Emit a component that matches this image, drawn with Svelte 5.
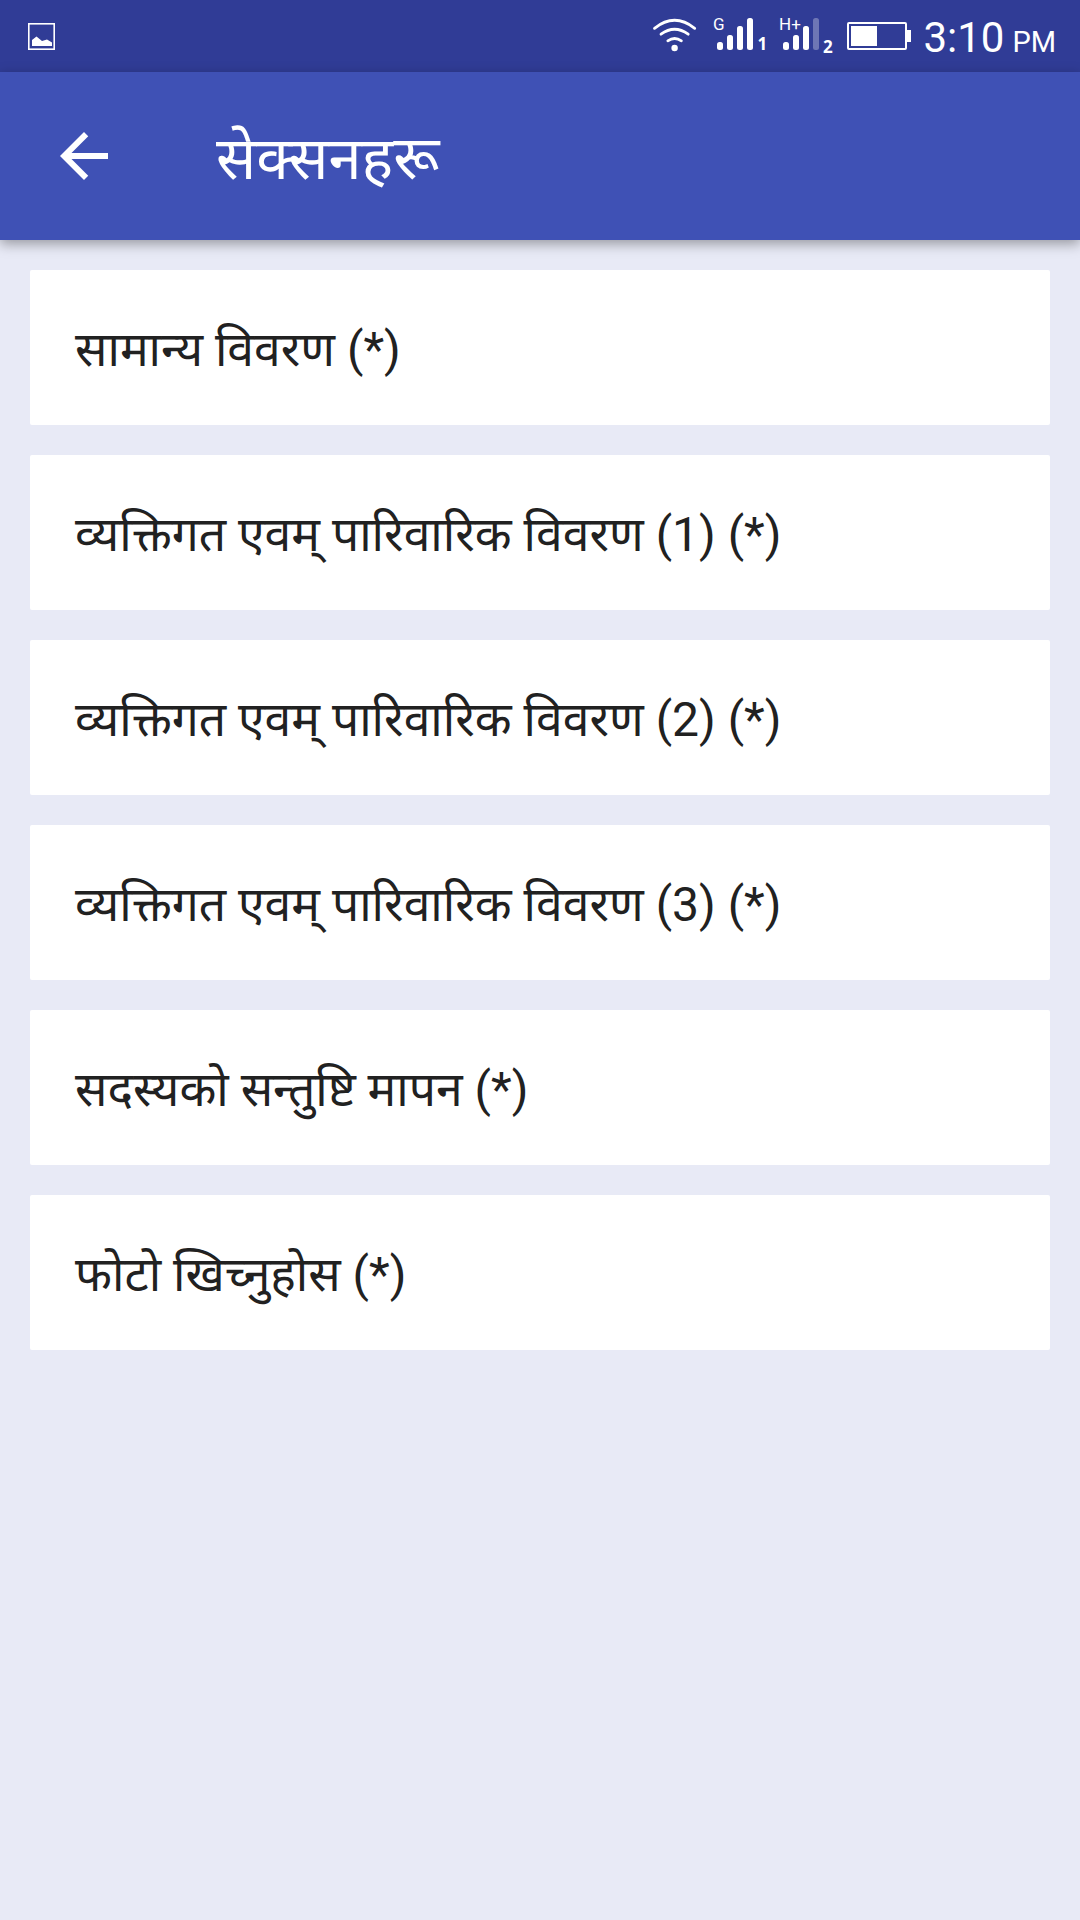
<script>
    // name of the screen, shown in the toolbar
    const title = "सेक्सनहरू";

    // all the sections of the form
    const sections = [
        "सामान्य विवरण (*)",
        "व्यक्तिगत एवम् पारिवारिक विवरण (1) (*)",
        "व्यक्तिगत एवम् पारिवारिक विवरण (2) (*)",
        "व्यक्तिगत एवम् पारिवारिक विवरण (3) (*)",
        "सदस्यको सन्तुष्टि मापन (*)",
        "फोटो खिच्नुहोस (*)",
    ];

    // the two sim cards, level is the number of full bars
    const sims = [
        { network: "G", slot: 1, level: 4, slotX: 43.5, slotY: 50 },
        { network: "H+", slot: 2, level: 3, slotX: 43, slotY: 53 },
    ];

    // x and top of every signal bar
    const bars = [
        { x: 3, y: 42 },
        { x: 13, y: 35 },
        { x: 23, y: 26 },
        { x: 33, y: 18 },
    ];
</script>

<div class="screen" lang="ne">
    <div class="status-bar">
        <svg class="picture-icon" width="27" height="27" viewBox="0 0 27 27">
            <rect x="0.8" y="0.8" width="25.4" height="25.4" fill="none" stroke="#fff" stroke-width="1.6" />
            <path d="M4 23V17L8.500 13.500L14 18L19 16.500L24 19.500V23Z" fill="#fff" />
        </svg>
        <div class="status-right">
            <svg class="wifi-icon" width="46" height="72" viewBox="0 0 46 72">
                <g fill="none" stroke="#fff" stroke-width="2.8" stroke-linecap="round">
                    <path d="M2.500 28.300Q22.600 12.300 42.700 28.300" />
                    <path d="M9 34.200Q22.600 24.400 36.200 34.200" />
                    <path d="M15.800 40.800Q22.600 36.100 29.400 40.800" />
                </g>
                <circle cx="22.6" cy="48" r="3.200" fill="#fff" />
            </svg>
            {#each sims as sim}
                <svg class="signal-icon" width="53" height="72" viewBox="0 0 53 72">
                    <text class="network" x="-1" y="30">{sim.network}</text>
                    {#each bars as bar, i}
                        <rect
                            x={bar.x}
                            y={bar.y}
                            width="6"
                            height={50 - bar.y}
                            rx="2.500"
                            fill="#fff"
                            opacity={i < sim.level ? 1 : 0.3}
                        />
                    {/each}
                    <text class="slot" x={sim.slotX} y={sim.slotY}>{sim.slot}</text>
                </svg>
            {/each}
            <svg class="battery-icon" width="64" height="28" viewBox="0 0 64 28">
                <rect x="1" y="1" width="58" height="26" rx="1" fill="none" stroke="#fff" stroke-width="2" />
                <rect x="4" y="4" width="26" height="20" fill="#fff" />
                <rect x="60" y="8" width="4" height="12" fill="#fff" />
            </svg>
            <div class="clock">3:10<span class="period">PM</span></div>
        </div>
    </div>

    <div class="toolbar">
        <button class="back-btn" aria-label="Back">
            <svg width="72" height="72" viewBox="0 0 24 24">
                <path d="M20 11H7.830l5.590-5.590L12 4l-8 8 8 8 1.410-1.410L7.830 13H20v-2z" fill="#fff" />
            </svg>
        </button>
        <h1 class="title">{title}</h1>
    </div>

    <div class="sections">
        {#each sections as section}
            <button class="section-btn">{section}</button>
        {/each}
    </div>
</div>

<style>
    :global(body) {
        background-color: #e8eaf6;
    }
    .screen {
        min-height: 1920px;
        background-color: #e8eaf6;
        font-family: Roboto, "Noto Sans", sans-serif;
    }
    .status-bar {
        height: 72px;
        padding: 0 24px 0 28px;
        box-sizing: border-box;
        display: flex;
        justify-content: space-between;
        align-items: center;
        background-color: #303c96;
        color: #fff;
    }
    .status-right {
        display: flex;
        align-items: center;
    }
    .wifi-icon {
        margin-right: 16px;
    }
    .signal-icon {
        margin-right: 13px;
        overflow: visible;
    }
    .network {
        font-size: 17px;
        fill: #fff;
    }
    .slot {
        font-family: "Noto Sans", sans-serif;
        font-size: 17px;
        font-weight: 700;
        fill: #fff;
    }
    .battery-icon {
        margin-left: 1px;
        margin-right: 12px;
    }
    .clock {
        padding-top: 7px;
        font-size: 42px;
        line-height: 65px;
        white-space: nowrap;
    }
    .period {
        margin-left: 8px;
        font-size: 29px;
    }
    .toolbar {
        position: relative;
        height: 168px;
        padding-left: 48px;
        display: flex;
        align-items: center;
        background-color: #3f51b5;
        box-shadow: 0 4px 12px rgba(0, 0, 0, 0.35);
    }
    .back-btn {
        width: 72px;
        height: 72px;
        padding: 0;
        border: none;
        background: none;
    }
    .back-btn svg {
        display: block;
    }
    .title {
        margin: 0 0 0 96px;
        padding-top: 5px;
        font-size: 59.5px;
        font-weight: 400;
        line-height: 80px;
        color: #fff;
    }
    .sections {
        display: flex;
        flex-direction: column;
        gap: 30px;
        padding: 30px;
    }
    .section-btn {
        height: 155px;
        padding: 4px 45px 0;
        border: none;
        border-radius: 2px;
        background-color: #fff;
        color: #212121;
        font-family: inherit;
        font-size: 48px;
        line-height: 72px;
        text-align: left;
        white-space: nowrap;
    }
</style>
